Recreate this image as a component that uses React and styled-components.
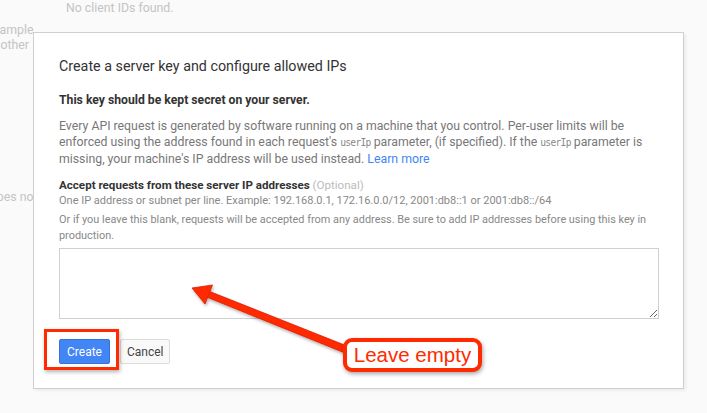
import styled, { createGlobalStyle } from "styled-components";

const GlobalStyle = createGlobalStyle`
  html, body {
    margin: 0;
    padding: 0;
    background: #fafafa;
    overflow: hidden;
  }
  body {
    font-family: Roboto, "Liberation Sans", Arial, sans-serif;
  }
`;

const Page = styled.div`
  position: relative;
  width: 707px;
  height: 413px;
  overflow: hidden;
  background: #fafafa;
`;

// faded page content behind the dialog
const Backdrop = styled.div`
  display: flex;
  flex-flow: column;
  color: #c4c4c4;
  font-size: 12.3px;
  line-height: 15px;
`;
const EmptyNote = styled.div`
  padding: 1px 0 0 66px;
`;
const SideText = styled.div`
  display: flex;
  flex-flow: column;
  margin: 7px 0 0 -13px;
`;
const SideLine = styled.span`
  margin-top: ${({ gap }) => gap || 0}px;
`;

const Dialog = styled.div`
  position: absolute;
  left: 33px;
  top: 32px;
  width: 598px;
  padding: 23px 26px 24px 25px;
  background: #fff;
  border: 1px solid #cfcfcf;
  box-shadow: 2px 2px 3px rgba(0, 0, 0, 0.06);
  display: flex;
  flex-flow: column;
`;
const Title = styled.h2`
  margin: 0;
  font-size: 14.3px;
  line-height: 20px;
  font-weight: 400;
  color: #333;
`;
const Strong = styled.div`
  margin-top: 16px;
  font-size: 12.2px;
  line-height: 16px;
  font-weight: 700;
  color: #333;
`;
const Para = styled.p`
  margin: 10px 0 0;
  font-size: 12.3px;
  line-height: 16px;
  color: #777;
`;
const Code = styled.code`
  font-family: "DejaVu Sans Mono", "Liberation Mono", monospace;
  font-size: 9.6px;
  letter-spacing: -0.7px;
  color: #888;
`;
const Link = styled.a`
  color: #4285f4;
  text-decoration: none;
`;
const FieldLabel = styled.div`
  margin-top: 10px;
  font-size: 11.6px;
  line-height: 16px;
  font-weight: 700;
  color: #333;
`;
const Optional = styled.span`
  font-weight: 400;
  color: #bbb;
`;
const Hint = styled.div`
  margin-top: ${({ gap }) => gap}px;
  font-size: ${({ size }) => size}px;
  line-height: ${({ lh }) => lh}px;
  color: #888;
`;
const Area = styled.textarea`
  margin-top: 4px;
  width: 600px;
  height: 71px;
  box-sizing: border-box;
  border: 1px solid #d0d0d0;
  border-radius: 0;
  outline: none;
  font: inherit;
`;
const Actions = styled.div`
  display: flex;
  gap: 10px;
  margin-top: 20px;
`;
const Button = styled.button`
  height: 25px;
  padding: 0 ${({ primary }) => (primary ? 7 : 6)}px;
  border-radius: 2px;
  font-family: Roboto, sans-serif;
  font-size: 12px;
  border: 1px solid ${({ primary }) => (primary ? "#3572d9" : "#dcdcdc")};
  background: ${({ primary }) => (primary ? "#4285f4" : "#f9f9f9")};
  color: ${({ primary }) => (primary ? "#fff" : "#444")};
`;

// annotation layer
const Highlight = styled.div`
  position: absolute;
  left: 44px;
  top: 329px;
  width: 69px;
  height: 35px;
  border: 3px solid #ff2a00;
  box-shadow: 1px 2px 4px rgba(0, 0, 0, 0.3);
`;
const Arrow = styled.svg`
  position: absolute;
  left: 0;
  top: 0;
  pointer-events: none;
`;
const Callout = styled.div`
  position: absolute;
  left: 343px;
  top: 338px;
  width: 131px;
  height: 26px;
  border: 4px solid #ff2a00;
  border-radius: 9px;
  background: #fff;
  box-shadow: 1px 2px 4px rgba(0, 0, 0, 0.35);
  display: flex;
  align-items: center;
  justify-content: center;
  font-family: "Liberation Sans", Arial, sans-serif;
  font-size: 20.5px;
  color: #ff2a00;
`;

export default function App() {
  return (
    <Page>
      <GlobalStyle />
      <Backdrop>
        <EmptyNote>No client IDs found.</EmptyNote>
        <SideText>
          <SideLine>example,</SideLine>
          <SideLine>another</SideLine>
          <SideLine gap={137}>types not</SideLine>
        </SideText>
      </Backdrop>

      <Dialog>
        <Title>Create a server key and configure allowed IPs</Title>
        <Strong>This key should be kept secret on your server.</Strong>
        <Para>
          Every API request is generated by software running on a machine that
          you control. Per-user limits will be enforced using the address found
          in each request's <Code>userIp</Code> parameter, (if specified). If
          the <Code>userIp</Code> parameter is missing, your machine's IP
          address will be used instead. <Link href="#">Learn more</Link>
        </Para>
        <FieldLabel>
          Accept requests from these server IP addresses{" "}
          <Optional>(Optional)</Optional>
        </FieldLabel>
        <Hint gap={1} lh={14} size={11}>
          One IP address or subnet per line. Example: 192.168.0.1,
          172.16.0.0/12, 2001:db8::1 or 2001:db8::/64
        </Hint>
        <Hint gap={4} lh={16} size={10.9}>
          Or if you leave this blank, requests will be accepted from any
          address. Be sure to add IP addresses before using this key in
          production.
        </Hint>
        <Area />
        <Actions>
          <Button primary>Create</Button>
          <Button>Cancel</Button>
        </Actions>
      </Dialog>

      <Highlight />
      <Arrow width="707" height="413">
        <defs>
          <filter id="sh" x="-10%" y="-10%" width="130%" height="140%">
            <feDropShadow dx="1" dy="2" stdDeviation="1.5" floodOpacity="0.3" />
          </filter>
        </defs>
        <g filter="url(#sh)" stroke="#d82000" strokeWidth="0.8" fill="#ff2a00">
          <polygon points="347,346 206,290 204,296 345,353" />
          <polygon points="192,288 212.5,285 205,304" strokeLinejoin="round" />
        </g>
      </Arrow>
      <Callout>Leave empty</Callout>
    </Page>
  );
}
